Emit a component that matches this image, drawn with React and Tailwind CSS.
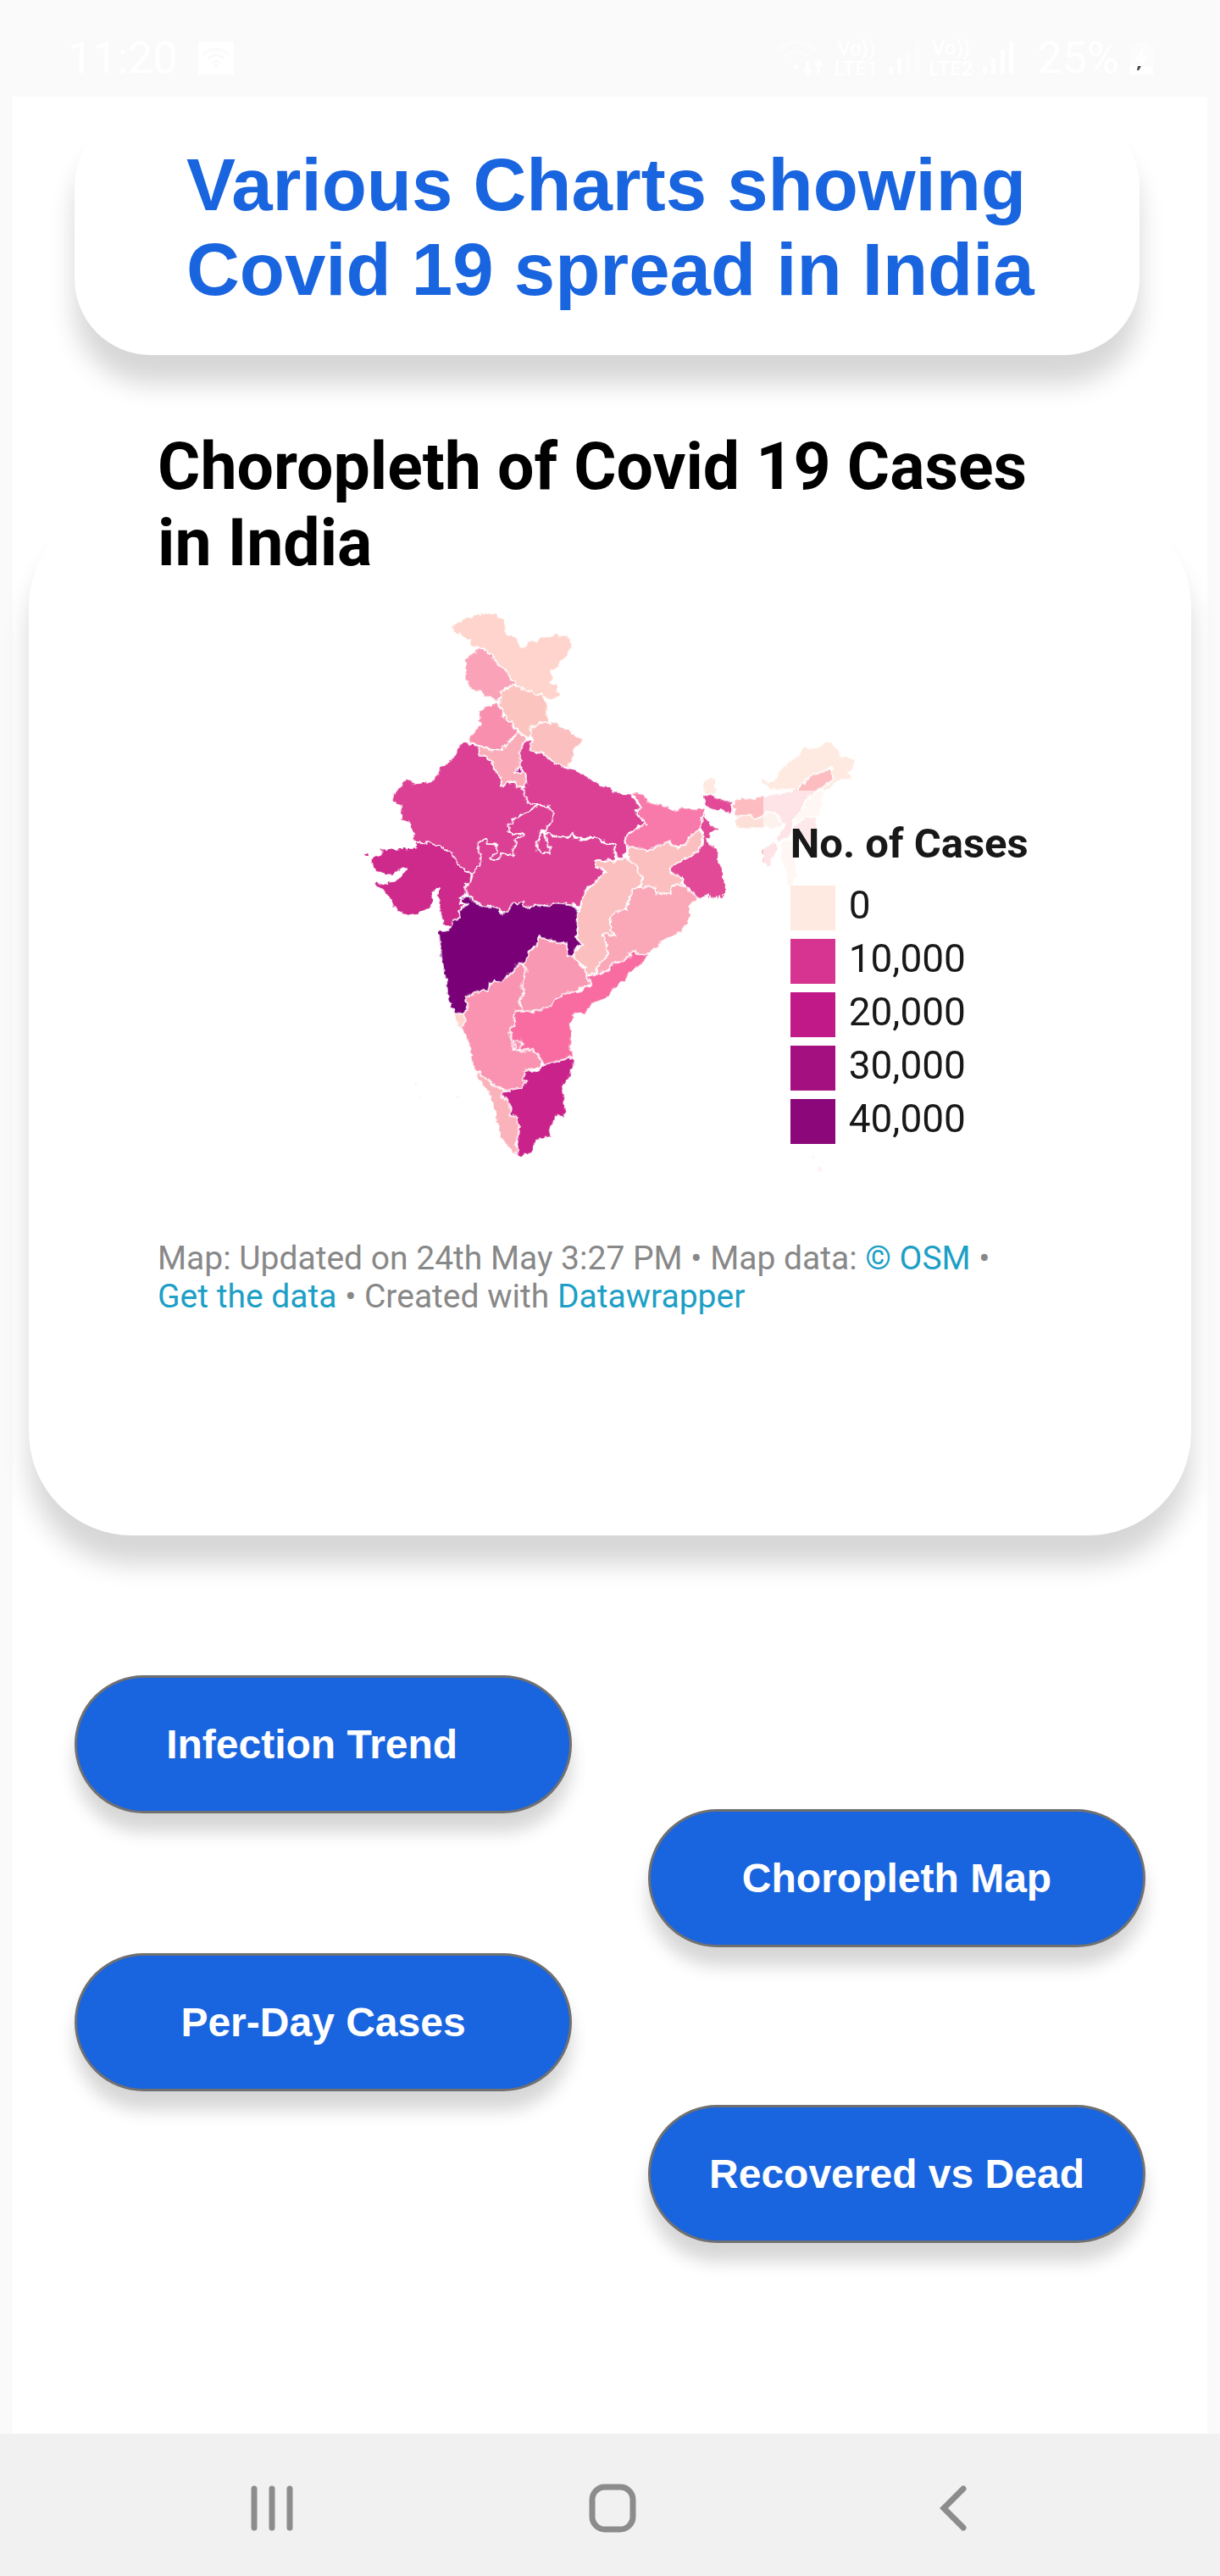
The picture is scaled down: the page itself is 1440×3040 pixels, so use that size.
const LEGEND = [
  { label: '0', swatch: 'bg-[#feeae1]' },
  { label: '10,000', swatch: 'bg-[#d73390]' },
  { label: '20,000', swatch: 'bg-[#c21988]' },
  { label: '30,000', swatch: 'bg-[#a51080]' },
  { label: '40,000', swatch: 'bg-[#8b077a]' },
];

const NORTH = [
  ['#fed4cc', 'M395 118L408 105L420 100L430 86L462 86L475 76L500 74L515 66L528 72L550 72L558 88L575 90L585 105L582 130L592 150L612 146L626 160L628 178L637 192L652 194L662 174L690 170L720 154L755 150L765 142L780 152L800 152L818 168L815 195L805 222L790 235L778 242L775 268L742 272L752 295L742 318L768 322L768 342L779 358L766 372L745 380L728 370L712 362L700 365L685 352L675 343L655 350L640 338L622 322L600 296L585 275L565 260L545 240L540 220L520 208L510 195L490 192L470 188L457 182L460 165L435 155L418 142L395 138Z'],
  ['#faa3b8', 'M480 194L510 196L520 208L540 220L545 242L565 260L585 275L598 296L622 322L605 326L590 338L570 345L572 368L555 380L540 378L520 370L502 368L500 350L478 348L455 336L447 325L442 300L444 270L438 235L455 225L458 213L475 208Z'],
  ['#fcc4bf', 'M570 345L590 338L605 326L622 326L655 350L675 343L692 358L712 362L722 375L733 405L732 435L738 452L745 465L720 457L685 465L675 480L672 512L655 512L640 500L625 480L610 470L605 452L590 447L575 425L570 405L553 392L572 370Z'],
  ['#f88fae', 'M550 383L556 398L570 408L575 430L590 448L605 455L612 475L625 482L620 505L600 522L585 532L575 548L528 556L510 545L485 538L452 535L455 510L475 485L498 462L490 460L494 440L490 415L510 400L535 395Z'],
  ['#dc3f94', 'M447 526L452 535L485 540L490 575L510 575L535 590L540 615L555 640L570 655L568 682L580 680L592 665L600 670L622 668L625 690L645 687L650 710L662 735L665 745L700 748L660 775L620 795L595 820L598 845L620 852L648 850L645 862L620 868L622 895L612 905L616 928L575 922L570 935L540 950L530 935L550 920L552 890L520 888L515 868L492 880L488 905L497 935L490 965L475 978L466 996L430 975L410 955L400 925L378 908L345 895L320 884L262 882L255 850L243 812L217 805L212 790L217 748L195 745L179 732L185 710L215 682L222 668L245 654L260 675L310 667L328 660L345 635L355 612L392 592L410 562L420 535Z'],
  ['#faadb8', 'M485 540L510 545L528 558L575 548L585 532L618 510L625 484L640 500L662 515L645 535L635 560L637 600L642 620L655 640L658 670L645 685L625 690L622 668L600 670L592 665L580 680L568 682L570 655L555 640L540 615L535 590L510 575L490 575Z'],
  ['#ce298c', 'M135 902L160 902L200 908L230 898L235 905L262 898L262 882L320 884L345 895L378 908L400 925L410 955L430 975L462 998L460 1025L440 1035L445 1070L420 1080L422 1098L450 1100L428 1112L420 1130L428 1150L400 1158L390 1180L365 1178L358 1150L350 1115L343 1070L352 1045L335 1043L328 1060L328 1100L312 1118L270 1135L232 1143L208 1132L185 1102L160 1065L135 1045L124 1028L132 1020L140 1028L190 1018L212 1000L232 978L205 980L195 995L170 1001L140 992L112 970L103 940L120 928L140 925L145 912Z'],
  ['#ce298c', 'M83 926L100 915L106 932L90 935Z'],
  ['#dc3f94', 'M668 515L682 520L672 530L675 555L690 568L712 560L735 580L755 600L808 622L830 625L870 645L915 680L945 685L985 708L1030 710L1050 740L1065 760L1045 775L1080 815L1015 852L1008 875L1015 905L1000 940L980 938L970 892L940 885L895 862L840 872L822 848L800 865L760 862L740 850L722 840L732 835L745 810L752 780L735 755L700 748L665 745L650 710L645 687L658 670L655 640L642 620L637 600L635 560L645 535Z'],
  ['#dc3f94', 'M466 996L475 978L490 965L497 935L488 905L492 880L515 868L520 888L552 890L550 920L530 935L540 950L570 935L575 922L616 928L612 905L622 895L620 868L645 862L648 850L620 852L598 845L595 820L620 795L660 775L700 750L735 755L752 780L745 810L732 835L705 842L708 858L695 880L700 910L715 920L740 922L742 905L728 880L722 850L740 850L760 862L800 865L822 848L830 870L870 874L895 862L940 888L970 892L970 945L905 947L904 965L937 985L912 1015L875 1042L855 1080L848 1112L820 1102L760 1098L740 1108L700 1105L650 1115L648 1092L610 1100L590 1130L570 1135L562 1112L500 1108L465 1088L460 1070L445 1070L440 1035L460 1025Z'],
  ['#dc3f94', 'M718 848L710 858L696 880L700 910L715 920L740 922L742 905L728 880Z'],
  ['#fcbfbf', 'M672 512L675 480L685 465L720 457L742 465L752 446L765 462L785 475L818 490L820 498L862 522L838 545L825 560L822 585L808 620L780 612L755 600L735 580L720 572L712 560L690 568L675 555L672 530L682 520Z'],
  ['#b8208c', 'M630 614L645 628L637 640L618 633Z'],
];

const EAST = [
  ['#f87aaa', 'M255 230L270 225L300 240L305 260L370 272L400 285L440 280L475 285L508 283L515 300L495 315L505 340L490 365L455 400L415 420L380 400L330 420L300 430L270 420L235 422L228 380L300 335L265 295L285 280Z'],
  ['#fcbfc0', 'M235 424L270 420L300 432L330 420L378 400L415 422L455 400L462 375L490 358L503 380L500 410L485 435L440 460L385 492L395 512L425 525L430 545L445 560L400 548L390 585L335 580L335 560L278 560L292 525L272 510L268 485L240 462Z'],
  ['#e24896', 'M500 235L545 235L550 248L580 250L585 258L610 258L605 302L582 300L570 288L560 292L520 278L515 300L512 320L530 325L533 342L560 352L560 360L535 365L530 385L515 390L522 405L555 425L555 465L572 490L585 570L583 602L576 590L572 604L562 592L556 606L546 594L540 606L532 592L525 605L522 585L490 603L465 582L445 560L430 545L425 525L395 512L385 492L440 460L485 435L500 410L503 380L495 340L497 318L515 295L520 280L512 270Z'],
  ['#faa8b8', 'M275 562L335 560L335 582L390 585L400 548L445 560L490 605L455 625L452 640L460 665L445 690L425 718L370 745L325 785L290 805L255 785L225 825L180 830L170 855L120 870L130 845L165 800L158 745L145 730L150 722L195 735L178 715L175 670L192 648L232 640L250 575Z'],
  ['#fcbfbf', 'M125 468L190 468L228 458L240 462L268 485L272 510L292 525L275 560L250 575L232 640L192 648L175 670L178 715L195 735L150 722L145 730L158 745L165 800L130 845L120 870L92 872L78 835L45 815L50 788L75 765L55 740L60 700L55 650L68 635L75 600L100 560L130 535L157 505L125 485Z'],
  ['#feeae1', 'M503 185L535 170L547 178L545 205L552 228L520 232L500 225Z'],
  ['#feeae1', 'M710 172L735 185L765 172L768 155L800 130L805 115L840 95L860 62L915 68L930 50L955 43L985 75L990 95L1035 105L1042 125L1020 155L1036 185L1010 175L985 185L935 222L920 212L965 180L955 158L960 138L900 160L865 185L840 216L740 220L732 198L712 195Z'],
  ['#fcbcc0', 'M612 256L640 242L680 248L730 235L800 222L840 216L865 185L900 160L960 138L955 158L965 180L920 212L880 240L862 262L855 290L825 320L820 350L815 385L795 385L775 405L765 395L768 375L790 345L775 320L755 295L730 295L710 312L690 320L670 308L640 308L622 320L612 300Z'],
  ['#fcdfd6', 'M618 318L640 308L670 308L690 320L710 312L730 295L755 295L775 320L793 335L768 355L700 352L660 355L618 348Z'],
  ['#feeae1', 'M928 215L928 270L910 310L870 312L830 330L825 318L855 290L865 260L890 232Z'],
  ['#fac8c8', 'M835 332L870 312L905 312L912 350L905 385L880 410L822 400L822 360Z'],
  ['#feeae1', 'M780 400L820 385L825 420L832 500L838 525L815 555L800 550L795 500L778 455Z'],
  ['#fcbcc0', 'M712 430L745 405L770 400L768 430L745 460L745 490L730 495L710 460Z'],
];

const SOUTH = [
  ['#7a0177', 'M422 182L460 170L465 188L500 208L562 212L570 235L590 230L610 200L648 190L650 213L700 205L740 208L760 196L820 202L840 215L835 250L840 280L832 320L858 345L835 355L822 388L806 388L800 340L755 335L700 315L695 350L672 362L668 385L648 412L632 410L610 440L575 470L528 480L525 505L490 510L440 532L452 560L440 585L420 590L405 583L388 565L378 520L375 470L358 400L350 330L347 295L370 292L385 290L395 258L425 250L422 222L450 200L425 195Z'],
  ['#fed4cc', 'M403 586L438 590L440 625L428 642L415 630Z'],
  ['#f998b2', 'M700 318L755 335L800 340L806 388L822 388L865 432L870 455L888 485L845 500L830 515L805 515L755 540L750 560L685 582L648 578L630 545L645 530L642 490L655 440L650 405L668 385L672 362L695 350Z'],
  ['#f993b1', 'M440 532L490 510L525 505L528 480L575 470L610 440L632 410L650 415L655 440L642 490L645 530L630 545L648 578L618 580L612 605L620 632L600 640L602 670L612 715L645 720L675 712L700 735L715 760L705 780L655 790L645 820L658 832L640 850L578 862L540 842L515 820L475 785L468 770L458 712L445 670L428 645L440 625L438 590L452 560Z'],
  ['#f86ca2', 'M618 580L648 578L685 582L750 560L755 540L805 515L845 508L888 485L870 455L900 450L950 435L960 410L1005 405L1035 365L1070 385L1105 365L1065 415L1030 435L1010 465L955 510L952 530L890 555L865 592L830 590L812 625L818 665L815 700L825 742L800 745L780 760L740 768L718 772L712 750L700 735L675 712L645 720L612 715L602 670L600 640L620 632L612 605Z'],
  ['#f993b1', 'M612 686L640 684L642 700L630 718L612 716L620 702Z'],
  ['#c9248a', 'M828 742L822 790L805 825L785 842L792 875L790 910L798 920L798 952L762 955L755 980L738 1005L745 1020L765 1022L720 1030L690 1040L682 1075L640 1100L618 1090L625 1050L632 1005L622 955L602 948L600 910L580 890L568 868L600 858L640 850L658 832L645 820L655 790L690 792L718 772L800 748Z'],
  ['#fab3ba', 'M475 788L515 820L540 842L578 862L570 872L580 890L600 910L602 948L625 955L632 1005L622 1050L625 1075L615 1085L580 1045L562 1005L545 930L515 855L490 825Z'],
];

const ISLANDS = 'M1592 1885l8 -14l6 14zM1667 1998l12 -6l-2 8zM1690 2028l10 4l6 16l-12 -2zM265 1732l4 6l-4 2zM411 1780l8 6l-6 0zM293 1860l4 -2l0 4zM282 1784l4 2l-4 2z';

function States({ shapes }) {
  return shapes.map(([fill, d]) => <path key={d} d={d} fill={fill} />);
}

function IndiaMap() {
  return (
    <svg viewBox="-648 0 3216 2100" className="block h-auto w-full" role="img" aria-label="Map of India coloured by number of cases">
      <defs>
        <filter id="coast" x="0" y="0" width="1" height="1" filterUnits="objectBoundingBox">
          <feTurbulence type="fractalNoise" baseFrequency="0.05" numOctaves="2" seed="4" result="noise" />
          <feDisplacementMap in="SourceGraphic" in2="noise" scale="20" xChannelSelector="R" yChannelSelector="G" />
        </filter>
      </defs>
      <g filter="url(#coast)" stroke="#fff" strokeWidth="5" strokeLinejoin="round">
        <States shapes={NORTH} />
        <g transform="translate(780 480)"><States shapes={EAST} /></g>
        <g transform="translate(0 900)"><States shapes={SOUTH} /></g>
      </g>
      <path d={ISLANDS} fill="#fcd5cf" />
    </svg>
  );
}

function Signal({ faded }) {
  return (
    <svg width="36" height="40" viewBox="0 0 36 40" fill="#fff" aria-hidden="true">
      <rect x="0" y="30" width="5" height="8" />
      <rect x="10" y="20" width="5" height="18" />
      <rect x="21" y="10" width="5" height="28" opacity={faded ? 0.4 : 1} />
      <rect x="31" y="0" width="5" height="38" opacity={faded ? 0.4 : 1} />
    </svg>
  );
}

function Lte({ n }) {
  return (
    <div className="flex flex-col items-center text-2xl leading-6 font-medium">
      <span>Vo))</span>
      <span>LTE{n}</span>
    </div>
  );
}

function StatusBar() {
  return (
    <header className="flex h-[114px] items-center justify-between pt-6 pr-[79px] pl-20 font-['Roboto',sans-serif] text-white">
      <div className="flex items-center gap-6">
        <span className="text-[52px] leading-[60px]">11:20</span>
        <svg width="42" height="40" viewBox="0 0 42 40" aria-hidden="true">
          <rect width="42" height="39" rx="2" fill="#fff" />
          <g fill="none" stroke="#fafafa" strokeWidth="3">
            <path d="M6 15q15-12 30 0M11 20q10-8 20 0M16 25q5-4 10 0" />
          </g>
          <circle cx="21" cy="29" r="2" fill="#fafafa" />
        </svg>
      </div>
      <div className="flex items-center gap-3">
        <svg width="58" height="44" viewBox="0 0 58 44" fill="none" stroke="#fff" strokeWidth="4" aria-hidden="true">
          <path d="M2 12q23-18 46 0M10 20q15-12 28 0" opacity=".4" />
          <circle cx="25" cy="32" r="3" fill="#fff" stroke="none" />
          <path d="M38 25v15m-4-5l4 5l4-5M51 40V25m-4 5l4-5l4 5" strokeWidth="3" />
        </svg>
        <Lte n={1} />
        <Signal faded />
        <Lte n={2} />
        <Signal />
        <span className="ml-4 text-[52px] leading-[60px]">25%</span>
        <svg width="28" height="40" viewBox="0 0 28 40" aria-hidden="true">
          <path d="M0 4h8V0h12v4h8v35H0z" fill="#fff" opacity=".4" />
          <path d="M0 29h28v10H0zM16 7L6 23h7l-2 11L22 18h-7z" fill="#fff" />
          <path d="M10 29h4l-3 5h-2z" fill="#444" />
        </svg>
      </div>
    </header>
  );
}

function ChartButton({ children }) {
  return (
    <button
      type="button"
      className="h-[163px] w-full rounded-full border-[3px] border-[#707070] bg-[#1964df] font-['Liberation_Sans',Arial,sans-serif] text-[48px] leading-[56px] font-bold whitespace-pre text-white shadow-[0_22px_20px_rgba(0,0,0,0.16)]"
    >
      {children}
    </button>
  );
}

export default function App() {
  return (
    <div className="bg-[#fafafa]">
      <StatusBar />
      <main className="flex flex-col bg-white mx-[15px]">
        <h1 className="mt-4 mr-20 ml-[73px] rounded-[90px] bg-white pt-[38px] pb-[51px] pl-[132px] font-['Liberation_Sans',Arial,sans-serif] text-[87px] leading-[100px] font-bold text-[#1964df] shadow-[0_34px_30px_rgba(0,0,0,0.16)]">
          Various Charts showing
          <br />
          Covid 19 spread in India
        </h1>

        <section className="mx-[19px] mt-[175px] flex flex-col rounded-[122px] bg-white pr-[148px] pb-[259px] pl-[152px] font-['Roboto',sans-serif] shadow-[0_34px_30px_rgba(0,0,0,0.16)]">
          <h2 className="-mt-[88px] text-[77px] leading-[90px] font-bold text-black">
            Choropleth of Covid 19 Cases in India
          </h2>
          <div className="relative mt-[14px]">
            <IndiaMap />
            <div className="absolute top-1/3 left-2/3 bg-white/60 pt-[36px] pb-12 pl-8 text-[46px] text-[#181818]">
              <h3 className="text-[49px] leading-[54px] font-bold whitespace-nowrap">No. of Cases</h3>
              <ul className="mt-[22px] flex flex-col gap-[10px]">
                {LEGEND.map(({ label, swatch }) => (
                  <li key={label} className="flex h-[53px] gap-4">
                    <span className={`size-[53px] ${swatch}`} />
                    <span className="leading-[46px]">{label}</span>
                  </li>
                ))}
              </ul>
            </div>
          </div>
          <p className="mt-[63px] text-[39px] leading-[45px] text-[#888]">
            Map: Updated on 24th May 3:27 PM • Map data:{' '}
            <a href="#osm" className="text-[#1d9fc6]">© OSM</a> •{' '}
            <a href="#data" className="whitespace-nowrap text-[#1d9fc6]">Get the data</a> • Created with{' '}
            <a href="#datawrapper" className="text-[#1d9fc6]">Datawrapper</a>
          </p>
        </section>

        <nav aria-label="Charts" className="grid grid-cols-2 gap-[90px] px-[73px] pb-[225px]">
          <div className="flex flex-col gap-[165px] pt-[165px]">
            <ChartButton>{'Infection Trend  '}</ChartButton>
            <ChartButton>Per-Day Cases</ChartButton>
          </div>
          <div className="flex flex-col gap-[186px] pt-[323px]">
            <ChartButton>Choropleth Map</ChartButton>
            <ChartButton>Recovered vs Dead</ChartButton>
          </div>
        </nav>
      </main>

      <footer className="grid h-[168px] grid-cols-3 place-items-center bg-[#f1f1f1] pt-6 pr-[114px] pb-4 pl-[120px]">
        <button type="button" aria-label="Recent apps">
          <svg width="58" height="58" viewBox="0 0 58 58" stroke="#8c8c8c" strokeWidth="7" strokeLinecap="round">
            <path d="M8 6v46M29 6v46M50 6v46" />
          </svg>
        </button>
        <button type="button" aria-label="Home">
          <svg width="58" height="58" viewBox="0 0 58 58" fill="none" stroke="#8c8c8c" strokeWidth="7">
            <rect x="5" y="4" width="48" height="50" rx="15" />
          </svg>
        </button>
        <button type="button" aria-label="Back">
          <svg width="58" height="58" viewBox="0 0 58 58" fill="none" stroke="#8c8c8c" strokeWidth="7" strokeLinecap="round">
            <path d="M41 6L18 29L41 52" />
          </svg>
        </button>
      </footer>
    </div>
  );
}
